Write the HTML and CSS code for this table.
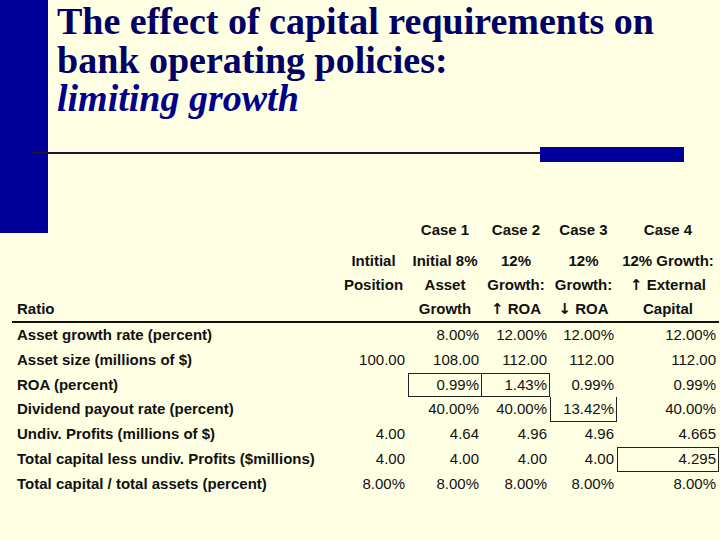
FILE: index.html
```html
<!DOCTYPE html>
<html>
<head>
<meta charset="utf-8">
<title>The effect of capital requirements on bank operating policies</title>
<link rel="stylesheet" href="styles.css">
</head>
<body>
<div class="slide">
  <header class="top">
    <div class="bar"></div>
    <div class="title-area">
      <h1 class="title">The effect of capital requirements on<br>bank operating policies:<br><em class="subtitle">limiting growth</em></h1>
      <div class="rule-row">
        <div class="rule"></div>
        <div class="accent"></div>
      </div>
    </div>
  </header>
  <table class="data">
    <colgroup>
      <col class="c-label">
      <col class="c-init">
      <col class="c-1">
      <col class="c-2">
      <col class="c-3">
      <col class="c-4">
    </colgroup>
    <thead>
      <tr class="case-row">
        <th></th>
        <th></th>
        <th>Case 1</th>
        <th>Case 2</th>
        <th>Case 3</th>
        <th>Case 4</th>
      </tr>
      <tr class="head-row">
        <th class="ratio">Ratio</th>
        <th>Intitial<br>Position</th>
        <th>Initial 8%<br>Asset<br>Growth</th>
        <th>12%<br>Growth:<br><span class="arrow">↑</span> ROA</th>
        <th>12%<br>Growth:<br><span class="arrow">↓</span> ROA</th>
        <th>12% Growth:<br><span class="arrow">↑</span> External<br>Capital</th>
      </tr>
    </thead>
    <tbody>
      <tr>
        <td class="label">Asset growth rate (percent)</td>
        <td></td>
        <td>8.00%</td>
        <td>12.00%</td>
        <td>12.00%</td>
        <td>12.00%</td>
      </tr>
      <tr>
        <td class="label">Asset size (millions of $)</td>
        <td>100.00</td>
        <td>108.00</td>
        <td>112.00</td>
        <td>112.00</td>
        <td>112.00</td>
      </tr>
      <tr>
        <td class="label">ROA (percent)</td>
        <td></td>
        <td class="box">0.99%</td>
        <td class="box box-join">1.43%</td>
        <td>0.99%</td>
        <td>0.99%</td>
      </tr>
      <tr>
        <td class="label">Dividend payout rate (percent)</td>
        <td></td>
        <td>40.00%</td>
        <td>40.00%</td>
        <td class="box box-below">13.42%</td>
        <td>40.00%</td>
      </tr>
      <tr>
        <td class="label">Undiv. Profits (millions of $)</td>
        <td>4.00</td>
        <td>4.64</td>
        <td>4.96</td>
        <td>4.96</td>
        <td>4.665</td>
      </tr>
      <tr>
        <td class="label">Total capital less undiv. Profits ($millions)</td>
        <td>4.00</td>
        <td>4.00</td>
        <td>4.00</td>
        <td>4.00</td>
        <td class="box">4.295</td>
      </tr>
      <tr>
        <td class="label">Total capital / total assets (percent)</td>
        <td>8.00%</td>
        <td>8.00%</td>
        <td>8.00%</td>
        <td>8.00%</td>
        <td>8.00%</td>
      </tr>
    </tbody>
  </table>
</div>
</body>
</html>
```

FILE: styles.css
```css
html, body {
  margin: 0;
  padding: 0;
  background: #FFFFE3;
}

.slide {
  width: 720px;
  height: 540px;
  overflow: hidden;
  background: #FFFFE3;
}

.top {
  display: flex;
  height: 218px;
}

.bar {
  flex: 0 0 48px;
  height: 233px;
  background: #000099;
}

.title-area {
  flex: 1;
  padding-top: 2px;
}

.title {
  margin: 0;
  padding-left: 9px;
  font-family: "Liberation Serif", "Times New Roman", serif;
  font-weight: bold;
  font-size: 38px;
  line-height: 38.5px;
  color: #000066;
  white-space: nowrap;
}

.subtitle {
  font-style: italic;
  color: #00008C;
}

.rule-row {
  display: flex;
  margin-top: 29.5px;
  margin-left: -17px;
  height: 15px;
}

.rule {
  width: 509px;
  height: 2px;
  margin-top: 5px;
  background: #2a1030;
}

.accent {
  width: 144px;
  height: 15px;
  background: #000099;
}

.data {
  margin-left: 12px;
  width: 707px;
  table-layout: fixed;
  border-collapse: separate;
  border-spacing: 0;
  font-family: "Liberation Sans", Arial, sans-serif;
  font-size: 15px;
  color: #111;
}

.c-label { width: 327px; }
.c-init { width: 69px; }
.c-1 { width: 74px; }
.c-2 { width: 68px; }
.c-3 { width: 67px; }
.c-4 { width: 102px; }

.data th {
  font-weight: bold;
  text-align: center;
  vertical-align: top;
  padding: 0;
  white-space: nowrap;
}

.arrow {
  font-family: "DejaVu Sans", sans-serif;
  font-weight: bold;
  font-size: 15px;
}

.case-row th {
  height: 30px;
  line-height: 24px;
}

.head-row th {
  line-height: 24px;
  padding-top: 1px;
  border-bottom: 2px solid #111;
}

.head-row th.ratio {
  text-align: left;
  vertical-align: bottom;
  padding-left: 5px;
}

.data td {
  height: 24.8px;
  line-height: 24.8px;
  padding: 0 3px 0 0;
  text-align: right;
  white-space: nowrap;
}

.data td.label {
  font-weight: bold;
  text-align: left;
  padding-left: 5px;
}

.data td.box {
  box-shadow: inset 0 0 0 1px #222;
}

.data td.box-join {
  box-shadow: inset 0 1px 0 #222, inset -1px 0 0 #222, inset 0 -1px 0 #222;
}

.data td.box-below {
  box-shadow: inset 1px 0 0 #222, inset -1px 0 0 #222, inset 0 -1px 0 #222;
}
```
